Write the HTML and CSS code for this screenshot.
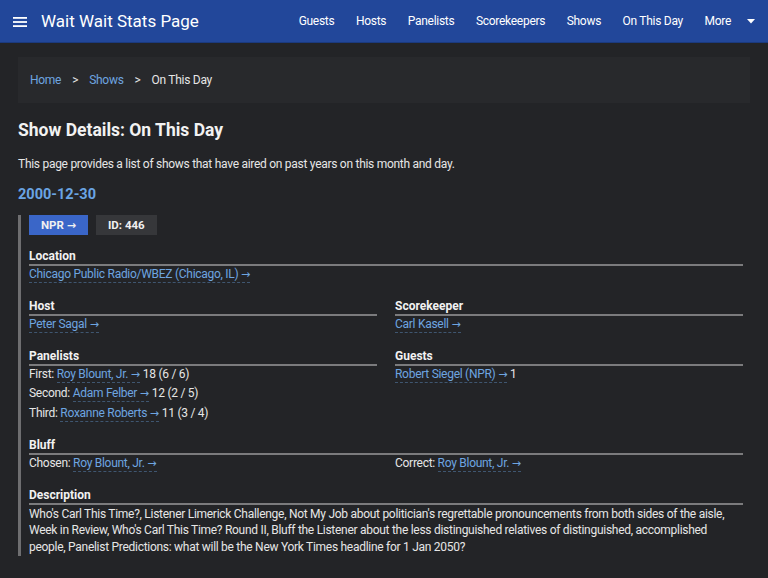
FILE: index.html
```html
<!DOCTYPE html>
<html lang="en">
<head>
<meta charset="utf-8">
<title>Wait Wait Stats Page</title>
<link rel="stylesheet" href="styles.css">
</head>
<body>
<header class="navbar">
  <div class="brand">
    <svg class="burger" width="14" height="12" viewBox="0 0 14 12"><rect x="0" y="1" width="14" height="1.8" fill="#fff"/><rect x="0" y="5.1" width="14" height="1.8" fill="#fff"/><rect x="0" y="9.2" width="14" height="1.8" fill="#fff"/></svg>
    <span class="title">Wait Wait Stats Page</span>
  </div>
  <nav class="links">
    <a href="#">Guests</a>
    <a href="#">Hosts</a>
    <a href="#">Panelists</a>
    <a href="#">Scorekeepers</a>
    <a href="#">Shows</a>
    <a href="#">On This Day</a>
    <a href="#" class="more">More <svg class="caret" width="8" height="5" viewBox="0 0 8 5"><path d="M0 0 L8 0 L4 4.5 Z" fill="#fff"/></svg></a>
  </nav>
</header>
<main class="content">
  <div class="crumbs">
    <a href="#">Home</a><span class="sep">&gt;</span><a href="#">Shows</a><span class="sep">&gt;</span><span class="cur">On This Day</span>
  </div>
  <h1>Show Details: On This Day</h1>
  <p class="intro">This page provides a list of shows that have aired on past years on this month and day.</p>
  <h2>2000-12-30</h2>
  <section class="show">
    <div class="badges">
      <span class="badge npr">NPR <span class="ar">→</span></span>
      <span class="badge id">ID: 446</span>
    </div>
    <div class="grid">
      <div class="sec full">
        <div class="lbl">Location</div>
        <div class="val"><a href="#" class="lk">Chicago Public Radio/WBEZ (Chicago, IL) <span class="ar">→</span></a></div>
      </div>
      <div class="sec">
        <div class="lbl">Host</div>
        <div class="val"><a href="#" class="lk">Peter Sagal <span class="ar">→</span></a></div>
      </div>
      <div class="sec">
        <div class="lbl">Scorekeeper</div>
        <div class="val"><a href="#" class="lk">Carl Kasell <span class="ar">→</span></a></div>
      </div>
      <div class="sec">
        <div class="lbl">Panelists</div>
        <div class="val">First: <a href="#" class="lk">Roy Blount, Jr. <span class="ar">→</span></a> 18 (6 / 6)</div>
        <div class="val">Second: <a href="#" class="lk">Adam Felber <span class="ar">→</span></a> 12 (2 / 5)</div>
        <div class="val">Third: <a href="#" class="lk">Roxanne Roberts <span class="ar">→</span></a> 11 (3 / 4)</div>
      </div>
      <div class="sec">
        <div class="lbl">Guests</div>
        <div class="val"><a href="#" class="lk">Robert Siegel (NPR) <span class="ar">→</span></a> 1</div>
      </div>
      <div class="sec full">
        <div class="lbl">Bluff</div>
        <div class="pair">
          <div class="val">Chosen: <a href="#" class="lk">Roy Blount, Jr. <span class="ar">→</span></a></div>
          <div class="val">Correct: <a href="#" class="lk">Roy Blount, Jr. <span class="ar">→</span></a></div>
        </div>
      </div>
      <div class="sec full last">
        <div class="lbl">Description</div>
        <div class="desc">Who's Carl This Time?, Listener Limerick Challenge, Not My Job about politician's regrettable pronouncements from both sides of the aisle, Week in Review, Who's Carl This Time? Round II, Bluff the Listener about the less distinguished relatives of distinguished, accomplished people, Panelist Predictions: what will be the New York Times headline for 1 Jan 2050?</div>
      </div>
    </div>
  </section>
</main>
</body>
</html>
```

FILE: styles.css
```css
* { box-sizing: border-box; }
html, body { margin: 0; padding: 0; }
body {
  background: #232427;
  color: #e6e6e6;
  font-family: Roboto, "Noto Sans", sans-serif;
  font-size: 12px;
  line-height: 1.6;
  letter-spacing: -0.28px;
  min-height: 578px;
}
a { text-decoration: none; }
.ar { font-family: "DejaVu Sans", sans-serif; font-size: 11px; letter-spacing: 0; line-height: 0; }

.navbar {
  height: 43px;
  background: #22479a;
  border-bottom: 1px solid #1b3a7e;
  display: flex;
  align-items: center;
  justify-content: space-between;
  padding: 1px 13px 0 13px;
}
.brand { display: flex; align-items: center; gap: 14px; }
.burger { display: block; }
.title { color: #fff; font-size: 17px; font-weight: 400; letter-spacing: 0; }
.links { display: flex; align-items: center; gap: 21.5px; }
.links a { color: #fff; font-size: 12px; }
.links .more { display: flex; align-items: center; gap: 16px; }
.caret { display: block; }

.content { padding: 14px 18px 0 18px; }
.crumbs {
  background: #28292c;
  height: 46px;
  display: flex;
  align-items: center;
  padding: 1px 12px 0 12px;
  font-size: 12px;
}
.crumbs a { color: #6ea5e0; }
.crumbs .sep { color: #e6e6e6; margin: 0 11px; }
.crumbs .cur { color: #e6e6e6; }

h1 {
  font-size: 17.5px;
  font-weight: 700;
  color: #f2f2f2;
  margin: 16px 0 0 0;
  line-height: 1.3;
  letter-spacing: 0;
}
.intro { margin: 13px 0 0 0; }
h2 {
  font-size: 14.5px;
  font-weight: 700;
  color: #6aa4e4;
  margin: 12px 0 0 0;
  line-height: 1.3;
  letter-spacing: 0;
}

.show {
  margin-top: 10px;
  border-left: 3px solid #6e6e70;
  padding: 0 7px 0 8px;
}
.badges { display: flex; gap: 8px; }
.badge {
  display: inline-block;
  height: 20px;
  line-height: 20px;
  padding: 0 12px;
  font-weight: 700;
  font-size: 11.5px;
  letter-spacing: 0;
  color: #f0f0f0;
}
.npr { background: #3a66c8; }
.id { background: #36373a; }

.grid {
  display: grid;
  grid-template-columns: 1fr 1fr;
  column-gap: 18px;
  margin-top: 14px;
}
.sec { margin-bottom: 14.5px; }
.sec.full { grid-column: 1 / span 2; }
.sec.last { margin-bottom: 0; }
.lbl {
  font-weight: 700;
  color: #f2f2f2;
  letter-spacing: 0;
  border-bottom: 2px solid #7b7b7d;
  line-height: 14px;
  padding-bottom: 1px;
  margin-bottom: -1px;
}
.val { line-height: 19.5px; }
.pair {
  display: grid;
  grid-template-columns: 1fr 1fr;
  column-gap: 18px;
}
.lk {
  color: #6ea5e0;
  border-bottom: 1px dashed #3f5670;
  padding-bottom: 1px;
}
.desc { line-height: 16.6px; padding-top: 2px; }
```
